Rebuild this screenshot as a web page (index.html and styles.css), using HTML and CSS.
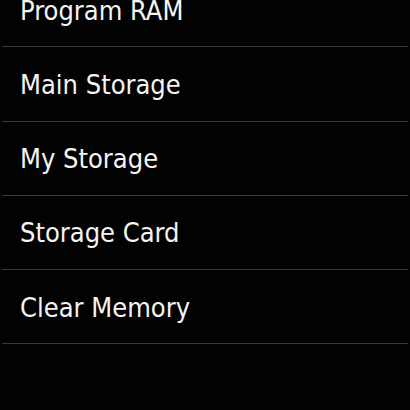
FILE: index.html
```html
<!DOCTYPE html>
<html>
<head>
    <title>Memory</title>
    <link rel="stylesheet" href="styles.css">
</head>
<body>
    <ul class="menu">
        <li class="menu-item">Program RAM</li>
        <li class="menu-item">Main Storage</li>
        <li class="menu-item">My Storage</li>
        <li class="menu-item">Storage Card</li>
        <li class="menu-item">Clear Memory</li>
    </ul>
</body>
</html>
```

FILE: styles.css
```css
body {
    margin: 0;
    background-color: #020202;
    font-family: "DejaVu Sans Condensed", "DejaVu Sans", Tahoma, sans-serif;
    color: #f4f4f4;
    height: 410px;
    overflow: hidden;
}
.menu {
    list-style: none;
    margin: -27px 0 0 0;
    padding: 0 2px;
}
.menu-item {
    box-sizing: border-box;
    height: 74.25px;
    display: flex;
    align-items: center;
    padding: 1px 0 0 18px;
    font-size: 27px;
    border-bottom: 1px solid #3a3a3a;
}
```
